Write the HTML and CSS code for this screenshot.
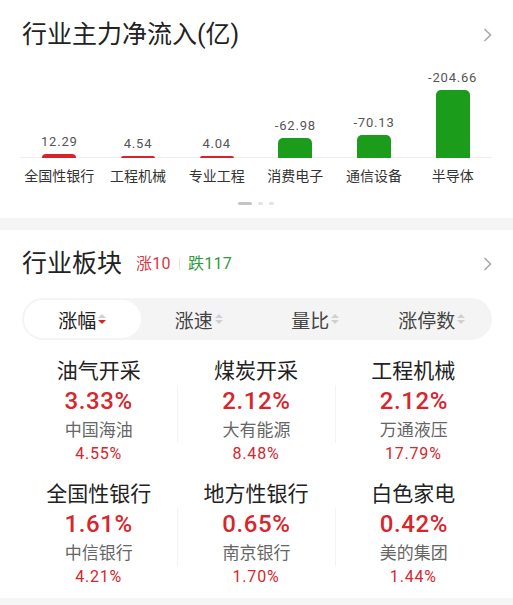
FILE: index.html
```html
<!DOCTYPE html>
<html lang="zh-CN">
<head>
    <meta charset="UTF-8">
    <meta name="viewport" content="width=device-width, initial-scale=1.0">
    <title>行业资金</title>
    <link rel="stylesheet" href="styles.css">
</head>
<body>
    <section class="panel">
        <div class="head">
            <h2 class="title">行业主力净流入(亿)</h2>
            <svg class="more" width="9" height="14" viewBox="0 0 9 14"><polyline points="1.5,1 7.5,7 1.5,13" fill="none" stroke="#aaa" stroke-width="1.6"/></svg>
        </div>
        <div class="chart">
            <div class="col"><span class="val">12.29</span><div class="bar up" style="height: 4px"></div></div>
            <div class="col"><span class="val">4.54</span><div class="bar up" style="height: 2px"></div></div>
            <div class="col"><span class="val">4.04</span><div class="bar up" style="height: 2px"></div></div>
            <div class="col"><span class="val">-62.98</span><div class="bar down" style="height: 20px"></div></div>
            <div class="col"><span class="val">-70.13</span><div class="bar down" style="height: 23px"></div></div>
            <div class="col"><span class="val">-204.66</span><div class="bar down" style="height: 68px"></div></div>
        </div>
        <div class="labels">
            <span>全国性银行</span>
            <span>工程机械</span>
            <span>专业工程</span>
            <span>消费电子</span>
            <span>通信设备</span>
            <span>半导体</span>
        </div>
        <div class="dots"><i class="on"></i><i></i><i></i></div>
    </section>

    <section class="panel">
        <div class="head head2">
            <div class="title-row">
                <h2 class="title">行业板块</h2>
                <span class="rise">涨10</span>
                <span class="sep"></span>
                <span class="fall">跌117</span>
            </div>
            <svg class="more" width="9" height="14" viewBox="0 0 9 14"><polyline points="1.5,1 7.5,7 1.5,13" fill="none" stroke="#aaa" stroke-width="1.6"/></svg>
        </div>
        <div class="tabs">
            <div class="tab on">涨幅<span class="sort desc"><b></b><b></b></span></div>
            <div class="tab">涨速<span class="sort"><b></b><b></b></span></div>
            <div class="tab">量比<span class="sort"><b></b><b></b></span></div>
            <div class="tab">涨停数<span class="sort"><b></b><b></b></span></div>
        </div>
        <div class="grid">
            <div class="cell">
                <div class="name">油气开采</div>
                <div class="mid"><div class="pct">3.33%</div><div class="stock">中国海油</div></div>
                <div class="spct">4.55%</div>
            </div>
            <div class="cell">
                <div class="name">煤炭开采</div>
                <div class="mid"><div class="pct">2.12%</div><div class="stock">大有能源</div></div>
                <div class="spct">8.48%</div>
            </div>
            <div class="cell">
                <div class="name">工程机械</div>
                <div class="mid"><div class="pct">2.12%</div><div class="stock">万通液压</div></div>
                <div class="spct">17.79%</div>
            </div>
            <div class="cell">
                <div class="name">全国性银行</div>
                <div class="mid"><div class="pct">1.61%</div><div class="stock">中信银行</div></div>
                <div class="spct">4.21%</div>
            </div>
            <div class="cell">
                <div class="name">地方性银行</div>
                <div class="mid"><div class="pct">0.65%</div><div class="stock">南京银行</div></div>
                <div class="spct">1.70%</div>
            </div>
            <div class="cell">
                <div class="name">白色家电</div>
                <div class="mid"><div class="pct">0.42%</div><div class="stock">美的集团</div></div>
                <div class="spct">1.44%</div>
            </div>
        </div>
    </section>
</body>
</html>
```

FILE: styles.css
```css
body { margin: 0; background: #fff; color: #222; font-family: Roboto, "Noto Sans CJK SC", sans-serif; }
.panel { padding: 0 21px 0 20px; border-bottom: 12px solid #f5f5f5; }

.head { height: 70px; display: flex; align-items: center; justify-content: space-between; }
.head2 { height: 68px; }
.title { margin: 0 0 0 2px; font-size: 25px; font-weight: 400; line-height: 30px; color: #222; }
.more { display: block; }
.title-row { display: flex; align-items: center; }
.rise, .fall { font-size: 16px; line-height: 20px; letter-spacing: 0.3px; }
.rise { margin-left: 14px; color: #d9363e; }
.fall { color: #2e9a3a; }
.sep { width: 1px; height: 12px; background: #e4e4e4; margin: 0 8px; }

.chart { height: 87px; display: grid; grid-template-columns: repeat(6, 1fr); align-items: end; border-bottom: 1px solid #eee; }
.col { display: flex; flex-direction: column; align-items: center; }
.val { font-size: 13px; line-height: 15px; color: #555; margin-bottom: 5px; letter-spacing: 0.8px; }
.bar { width: 34px; border-radius: 5px 5px 0 0; }
.bar.up { background: #d8232a; }
.bar.down { background: #1b9c1b; }
.labels { display: grid; grid-template-columns: repeat(6, 1fr); margin-top: 8px; text-align: center; font-size: 14px; line-height: 20px; color: #333; white-space: nowrap; }
.dots { display: flex; justify-content: center; gap: 6px; margin: 16px 0 13px; }
.dots i { width: 5px; height: 3px; border-radius: 2px; background: #e2e2e2; }
.dots i.on { width: 14px; background: #c4c4c4; }

.tabs { margin-left: 2px; height: 42px; box-sizing: border-box; padding: 2px; border-radius: 21px; background: #f4f4f4; display: flex; }
.tab { flex: 1; border-radius: 19px; display: flex; align-items: center; justify-content: center; font-size: 19px; color: #444; }
.tab.on { background: #fff; color: #222; }
.sort { display: inline-flex; flex-direction: column; gap: 2px; margin-left: 2px; }
.sort b { width: 0; height: 0; border-left: 4px solid transparent; border-right: 4px solid transparent; }
.sort b:first-child { border-bottom: 4px solid #d0d0d0; }
.sort b:last-child { border-top: 4px solid #d0d0d0; }
.sort.desc b:last-child { border-top-color: #d8232a; }

.grid { display: grid; grid-template-columns: repeat(3, 1fr); row-gap: 14.5px; margin-top: 17px; padding-bottom: 10.5px; text-align: center; }
.name { font-size: 21px; line-height: 28px; color: #222; }
.pct { font-size: 24px; line-height: 32px; font-weight: 500; color: #d9252c; letter-spacing: 0.6px; }
.stock { font-size: 17px; line-height: 26px; color: #666; }
.spct { font-size: 16px; line-height: 22px; color: #d9252c; letter-spacing: 0.8px; }
.cell:nth-child(3n+2) .mid, .cell:nth-child(3n) .mid { border-left: 1px solid #f3f3f3; }
```
